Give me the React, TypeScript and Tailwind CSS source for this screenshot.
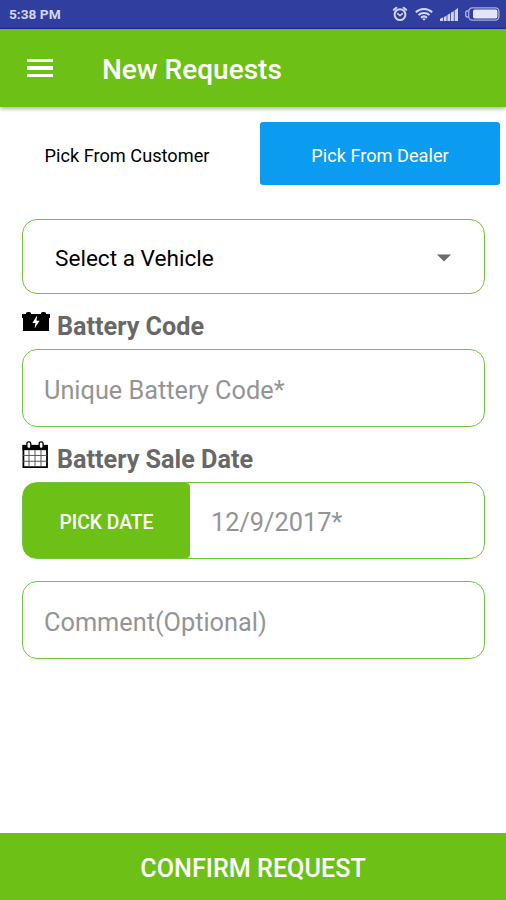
import type { ReactNode } from "react";

function AlarmIcon() {
  return (
    <svg className="w-4 h-4" viewBox="0 0 16 16" fill="none" stroke="#d3d6f0">
      <circle cx="8" cy="8.6" r="5.4" strokeWidth="2" />
      <path d="M1.8 3.8 4.4 1.8M14.2 3.8 11.6 1.8" strokeWidth="2" strokeLinecap="round" />
      <path d="M5.2 7.4 8 9.6 10.8 7.4" strokeWidth="1.6" />
    </svg>
  );
}

function WifiIcon() {
  return (
    <svg className="w-[18px] h-[14px]" viewBox="0 0 18 14" fill="none" stroke="#d3d6f0" strokeWidth="2">
      <path d="M.8 5.2C5.4.8 12.6.8 17.2 5.2" />
      <path d="M3.5 8.1c3.1-2.9 7.9-2.9 11 0" />
      <path d="M6 10.7c1.7-1.5 4.3-1.5 6 0" />
      <path d="M7.2 11.8 9 13.8l1.8-2Q9 10.6 7.2 11.8Z" fill="#d3d6f0" stroke="none" />
    </svg>
  );
}

function SignalIcon() {
  return (
    <svg className="w-[18px] h-[13px] mt-px" viewBox="0 0 18 13" fill="#d3d6f0">
      <path d="M0 13v-2.2L3 9.6V13zM3.8 13V9.2l2.8-1.6V13zM7.4 13V7l2.8-1.8V13zM11 13V4.8L13.8 3v10zM14.6 13V2.4L18 0v13z" />
    </svg>
  );
}

function BatteryLevelIcon() {
  return (
    <svg className="w-[35px] h-[14px]" viewBox="0 0 35 14" fill="none">
      <path d="M3.4 4H2.2Q.8 4 .8 5.4v3.2Q.8 10 2.2 10h1.2" stroke="#b9bee6" strokeWidth="1.3" />
      <rect x="3.7" y=".9" width="30.2" height="12.2" rx="3.5" stroke="#a9afdf" strokeWidth="1.3" />
      <rect x="8" y="2.4" width="24.4" height="9.2" rx="1.8" fill="#e3e5f7" />
    </svg>
  );
}

function CarBatteryIcon() {
  return (
    <svg className="w-7 h-[19px] mt-px" viewBox="0 0 28 19">
      <path d="M4 1.2Q4 0 6.5 0T9 1.2V2h10v-.8Q19 0 21.5 0T24 1.2V2h4v4h-1v13H1V6H0V2h4z" fill="#000" />
      <path d="M15 3.5 10.4 11h3l-.8 5.5 5-7.7h-3z" fill="#fff" />
    </svg>
  );
}

function CalendarIcon() {
  return (
    <svg className="w-[26px] h-[27px] -mt-[3px]" viewBox="0 0 26 28" preserveAspectRatio="none" fill="none">
      <path d="M1.4 5h23.6v22H1.4z" fill="#fff" stroke="#000" strokeWidth="1.8" />
      <path d="M.5 4h25.4v5.5H.5z" fill="#000" />
      <path d="M7 9v18M13 9v18M19 9v18M1 15h24M1 21h24" stroke="#555" />
      <rect x="4.9" y=".8" width="3.9" height="6.8" rx="1.7" fill="#fff" stroke="#000" strokeWidth="1.3" />
      <rect x="17.2" y=".8" width="3.9" height="6.8" rx="1.7" fill="#fff" stroke="#000" strokeWidth="1.3" />
    </svg>
  );
}

function FieldLabel({ icon, children }: { icon: ReactNode; children: ReactNode }) {
  return (
    <div className="flex h-[55px] pt-[17px] gap-[7px]">
      <div className="w-7 shrink-0">{icon}</div>
      <span className="text-[25.2px] leading-[32px] font-bold text-[#686868] whitespace-nowrap">{children}</span>
    </div>
  );
}

export default function App() {
  return (
    <div className="w-full h-[900px] flex flex-col bg-white font-['Roboto',sans-serif] overflow-hidden">
      <div className="h-[29px] shrink-0 flex items-center justify-between bg-[#303f9f] border-b border-[#20209c] pl-[9px] pr-[6px]">
        <span className="pt-px text-[13.7px] font-bold text-[#d3d6f0] whitespace-nowrap">5:38 PM</span>
        <div className="flex items-center gap-[7px]">
          <AlarmIcon />
          <WifiIcon />
          <SignalIcon />
          <BatteryLevelIcon />
        </div>
      </div>

      <header className="h-[78px] shrink-0 flex items-center bg-[#6dc015] px-[27px] shadow-[0_2px_4px_rgba(0,0,0,0.3)]">
        <button className="w-[26px] flex flex-col gap-[4px]" aria-label="Menu">
          <span className="block w-full h-[3.5px] bg-white" />
          <span className="block w-full h-[3.5px] bg-white" />
          <span className="block w-full h-[3.5px] bg-white" />
        </button>
        <h1 className="ml-[49px] pt-[3px] text-[28px] font-medium text-white whitespace-nowrap">New Requests</h1>
      </header>

      <div className="flex mt-[15px] h-[63px] shrink-0 pl-[7px] pr-[6px] gap-[13px] text-[18.2px]">
        <button className="flex-1 pt-[5px] text-black whitespace-nowrap">Pick From Customer</button>
        <button className="w-[240px] pt-[5px] rounded-[3px] bg-[#0b9bf0] text-white whitespace-nowrap">Pick From Dealer</button>
      </div>

      <main className="flex-1 flex flex-col pl-[22px] pr-[21px] pt-[34px] text-[25.3px]">
        <div className="h-[75px] shrink-0 flex items-center justify-between border-[1.5px] border-[#70c43a] rounded-[15px] pl-[32px] pr-[33px]">
          <span className="text-[22.6px] text-black pt-[5px]">Select a Vehicle</span>
          <svg className="w-[14px] h-[8px] mt-[2px]" viewBox="0 0 14 8" fill="#6b6b6b">
            <path d="M0 .5h14l-7 7z" />
          </svg>
        </div>

        <FieldLabel icon={<CarBatteryIcon />}>Battery Code</FieldLabel>
        <div className="h-[78px] shrink-0 flex items-center border-[1.5px] border-[#70c43a] rounded-[15px] pl-[21px] pt-[5px] text-[#949494]">
          Unique Battery Code*
        </div>

        <FieldLabel icon={<CalendarIcon />}>Battery Sale Date</FieldLabel>
        <div className="h-[77px] shrink-0 flex items-center border-[1.5px] border-[#70c43a] rounded-[15px]">
          <button className="w-[167px] h-full rounded-l-[12px] rounded-r-[4px] bg-[#6dc015] pt-[6px] text-[19.3px] font-medium text-white whitespace-nowrap">
            PICK DATE
          </button>
          <span className="ml-[21px] pt-[5px] text-[#949494]">12/9/2017*</span>
        </div>

        <div className="mt-[22px] h-[78px] shrink-0 flex items-center border-[1.5px] border-[#70c43a] rounded-[15px] pl-[21px] pt-[5px] text-[#949494]">
          Comment(Optional)
        </div>
      </main>

      <button className="h-[67px] shrink-0 bg-[#6dc015] pt-[5px] text-[25.2px] font-medium text-white">
        CONFIRM REQUEST
      </button>
    </div>
  );
}
